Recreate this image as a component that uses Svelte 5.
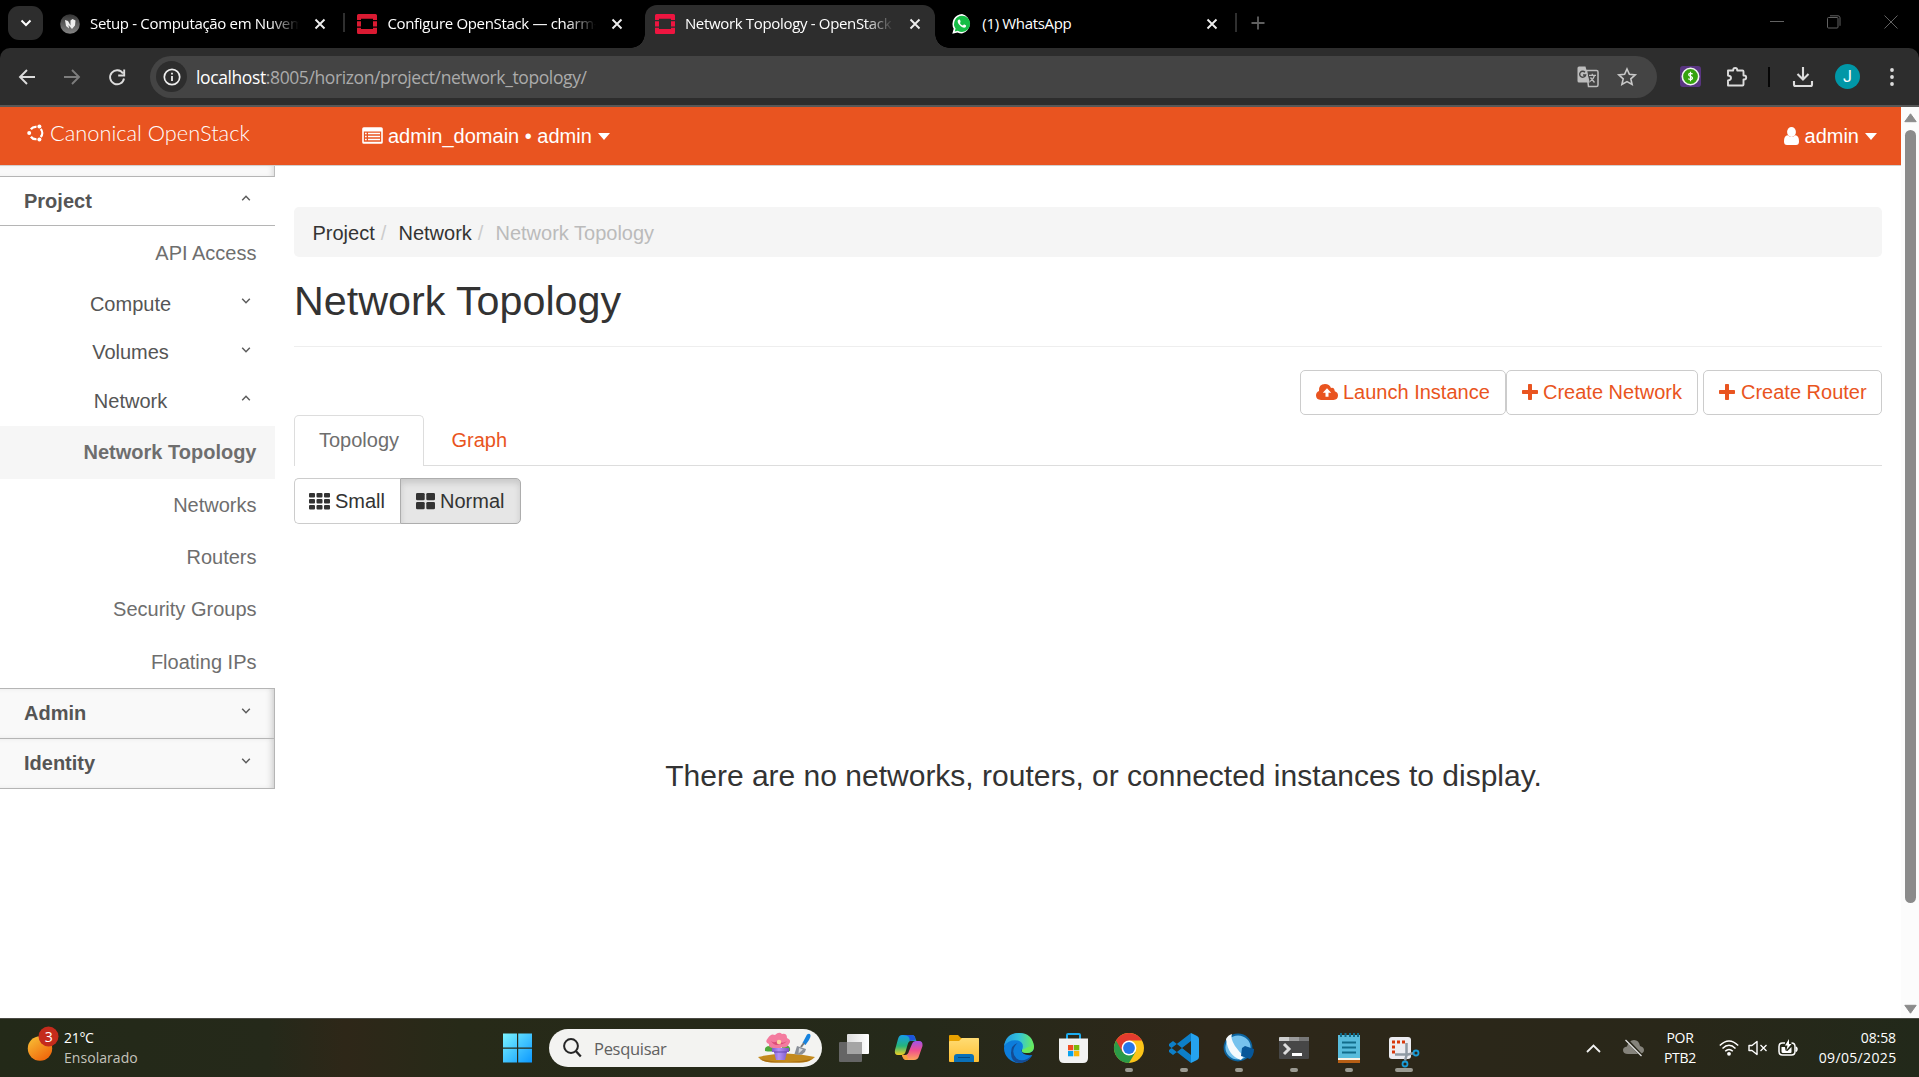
<script>
  const tabs = [
    { title: 'Setup - Computação em Nuvem', icon: 'moodle', fade: true, sep: true },
    { title: 'Configure OpenStack — charm-', icon: 'openstack', fade: true, sep: false },
    { title: 'Network Topology - OpenStack', icon: 'openstack', fade: true, active: true, sep: false },
    { title: '(1) WhatsApp', icon: 'whatsapp', fade: false, sep: true }
  ];
  const groups = [
    { label: 'Compute', open: false },
    { label: 'Volumes', open: false },
    { label: 'Network', open: true }
  ];
  const pages = ['Network Topology', 'Networks', 'Routers', 'Security Groups', 'Floating IPs'];
  const apps = ['taskview', 'copilot', 'explorer', 'edge', 'store', 'chrome', 'vscode', 'workbench', 'terminal', 'notepad', 'snip'];
  const running = ['chrome', 'vscode', 'workbench', 'terminal', 'notepad'];
</script>

{#snippet chevron(up)}
  <svg class="chev" width="10" height="6" viewBox="0 0 10 6"><path d={up ? 'M1.2 5.2 5 1.3l3.800 3.900' : 'M1.200 .8 5 4.700 8.800 .8'} fill="none" stroke="#5c5c5c" stroke-width="1.500" /></svg>
{/snippet}

{#snippet plus()}
  <svg width="16" height="16" viewBox="0 0 16 16"><path d="M6 .8q0-.8.8-.8h2.400q.8 0 .8.8V6h5.200q.8 0 .8.8v2.400q0 .8-.8.8H10v5.200q0 .8-.8.8H6.800q-.8 0-.8-.8V10H.8Q0 10 0 9.200V6.800Q0 6 .8 6H6z" fill="#e95420" /></svg>
{/snippet}

<div class="screen">
  <div class="strip">
    <div class="tabsearch"><svg width="12" height="8" viewBox="0 0 12 8"><path d="M1.500 1.500 6 6l4.500-4.500" fill="none" stroke="#fff" stroke-width="2" /></svg></div>
    {#each tabs as tab}
      <div class="slot">
        <div class="tab" class:active={tab.active}>
          {#if tab.icon === 'moodle'}
            <svg width="20" height="20" viewBox="0 0 20 20"><defs><linearGradient id="mdl" x1="0" y1="0" x2="0" y2="1"><stop stop-color="#333" /><stop offset="1" stop-color="#858585" /></linearGradient></defs><circle cx="10" cy="10" r="9.800" fill="url(#mdl)" /><path d="M5 6l3 1 2.500 4.500V6.500L12.500 5l3 1.500-.5 5-3 3.500-3.500-4 .5 3.500L6 12z" fill="#eee" /></svg>
          {:else if tab.icon === 'openstack'}
            <svg width="20" height="20" viewBox="0 0 20 20"><path d="M1.500 0h17Q20 0 20 1.500V6h-4V4.800H4V6H0V1.500Q0 0 1.500 0zM0 7.200h4v5.200H0zM16 7.200h4v5.200h-4zM0 13.800h4V15h12v-1.200h4v4.700q0 1.500-1.500 1.500h-17Q0 20 0 18.500z" fill={tab.active ? '#ee1540' : '#da1a32'} /></svg>
          {:else}
            <svg width="20" height="20" viewBox="0 0 20 20"><path d="M10 0a10 10 0 0 1 0 19.500 10 10 0 0 1-4.500-1L.3 19.800l1.400-5A10 10 0 0 1 10 0z" fill="#fff" /><path d="M10 1.700a8.100 8.100 0 0 1 0 16.200 8 8 0 0 1-4.200-1.200l-3 .8.8-3A8.100 8.100 0 0 1 10 1.700z" fill="#16bd46" /><path d="M7 5.500c-2.500 1-1 4 .8 5.800s5 3.800 6.200 1.300c.5-1.200-.3-1.400-1.500-2-.8-.4-1 .6-1.700.9C9.300 11.200 8.300 9.800 8 9c1.200-1.300.2-3.500-1-3.500z" fill="#fff" /></svg>
          {/if}
          <span class="tabtitle" class:fade={tab.fade}>{tab.title}</span>
          <svg width="12" height="12" viewBox="0 0 12 12"><path d="M1.500 1.500l9 9m0-9l-9 9" stroke="#eee" stroke-width="1.900" /></svg>
        </div>
        {#if tab.sep}<i class="tabsep"></i>{/if}
      </div>
    {/each}
    <svg class="newtab" width="14" height="14" viewBox="0 0 14 14"><path d="M7 .5v13M.5 7h13" stroke="#606060" stroke-width="1.800" /></svg>
    <div class="winbtns">
      <svg width="14" height="14" viewBox="0 0 14 14"><path d="M0 6.500h14" stroke="#626262" /></svg>
      <svg width="14" height="14" viewBox="0 0 14 14"><rect x=".5" y="2.500" width="10.500" height="10.500" rx="1" fill="none" stroke="#626262" /><path d="M3 .8h8q2 0 2 2v8" fill="none" stroke="#626262" /></svg>
      <svg width="14" height="14" viewBox="0 0 14 14"><path d="M.5.5l13 13m0-13l-13 13" stroke="#626262" /></svg>
    </div>
  </div>

  <div class="toolbarwrap"><div class="toolbar">
    <div class="navicons">
      <svg width="18" height="18" viewBox="0 0 18 18"><path d="M17 9H2.500M9 2 2 9l7 7" fill="none" stroke="#dcdcdc" stroke-width="1.900" /></svg>
      <svg width="18" height="18" viewBox="0 0 18 18"><path d="M1 9h14.500M9 2l7 7-7 7" fill="none" stroke="#7d7d7d" stroke-width="1.900" /></svg>
      <svg width="18" height="18" viewBox="0 0 18 18"><path d="M15 5.500A7 7 0 1 0 16 10.500M16.200 1.500v6h-6" fill="none" stroke="#dcdcdc" stroke-width="1.900" /></svg>
    </div>
    <div class="omnibox">
      <div class="info"><svg width="18" height="18" viewBox="0 0 18 18"><circle cx="9" cy="9" r="7.700" fill="none" stroke="#eee" stroke-width="1.700" /><path d="M9 8v5M9 4.800v1.800" stroke="#eee" stroke-width="1.800" /></svg></div>
      <span class="url"><b>localhost</b>:8005/horizon/project/network_topology/</span>
      <svg class="translate" width="22" height="22" viewBox="0 0 22 22"><path d="M9.500 4.500h10q1.500 0 1.500 1.500v13q0 1.500-1.500 1.500h-8z" fill="none" stroke="#bdbdbd" stroke-width="1.500" /><path d="M2 .5h6.500l4.300 16H2Q.5 16.500.5 15V2Q.5.5 2 .5z" fill="#bdbdbd" /><path d="M8 6.300A3 3 0 1 0 8.600 9H6" fill="none" stroke="#444" stroke-width="1.400" /><path d="M12 9.300h7M15.300 7.800v1.500M17.500 9.500q-1 4-4.500 6M13.500 11.500l4 5" fill="none" stroke="#bdbdbd" stroke-width="1.300" /></svg>
      <svg width="20" height="20" viewBox="0 0 20 20"><path d="M10 2l2.400 5.300 5.800.6-4.400 3.900 1.300 5.700L10 14.600l-5.100 2.900 1.300-5.700L1.800 7.900l5.800-.6z" fill="none" stroke="#c8c8c8" stroke-width="1.600" /></svg>
    </div>
    <svg class="ext" width="21" height="21" viewBox="0 0 21 21"><rect width="21" height="21" rx="3" fill="#593581" /><circle cx="10.500" cy="10.500" r="8.200" fill="#36a30e" stroke="#f3f3f3" stroke-width="1.600" /><path d="M12.700 8.100q-2.200-1.300-3.700-.3-1.100 1.700 1.500 2.600 3.100 1.200 1.500 2.700-1.700.9-3.800-.3M10.500 5.800v9.400" fill="none" stroke="#fff" stroke-width="1.200" /></svg>
    <svg class="puzzle" width="22" height="22" viewBox="0 0 22 22"><path d="M2 4.500h5.200V4a2 2 0 0 1 4 0v.5h5.300q1 0 1 1V9.500h.7a2 2 0 0 1 0 4h-.7v5q0 1-1 1H2v-5c4-.8 4-4.500 0-5z" fill="none" stroke="#dcdcdc" stroke-width="1.900" stroke-linejoin="round" /></svg>
    <i class="toolsep"></i>
    <svg class="download" width="22" height="22" viewBox="0 0 22 22"><path d="M11 1v12M5.500 8l5.500 5.500L16.500 8M2 15v3.500q0 1.500 1.500 1.500h15q1.500 0 1.500-1.500V15" fill="none" stroke="#dcdcdc" stroke-width="2.100" /></svg>
    <div class="avatar">J</div>
    <svg class="dots" width="4" height="18" viewBox="0 0 4 18"><g fill="#dcdcdc"><circle cx="2" cy="2" r="1.900" /><circle cx="2" cy="9" r="1.900" /><circle cx="2" cy="16" r="1.900" /></g></svg>
  </div></div>

  <div class="viewport">
    <div class="page">
      <header>
        <svg class="ubuntu" width="17" height="18" viewBox="0 0 17 18"><g fill="none" stroke="#fff" stroke-width="2.300"><path d="M3.900 5.300A6 6 0 0 1 9.500 2.900" /><path d="M3.900 12.700A6 6 0 0 0 9.500 15.100" /><path d="M13.700 5a6 6 0 0 1 0 8" /></g><g fill="#fff"><circle cx="2.200" cy="9" r="2" /><circle cx="12.400" cy="2.600" r="2" /><circle cx="12.400" cy="15.400" r="2" /></g></svg>
        <span class="brand">Canonical OpenStack</span>
        <svg class="listicon" width="21" height="17" viewBox="0 0 21 17"><path d="M1.800.2h17.400q1.600 0 1.600 1.600v13.400q0 1.600-1.600 1.600H1.800Q.2 16.800.2 15.200V1.800Q.2.200 1.800.2zM1.800 4.500v10.300h17.400V4.500z" fill="#fff" fill-rule="evenodd" /><path d="M3 6.500h1.700M3 9.500h1.700M3 12.500h1.700M6 6.500h12M6 9.500h12M6 12.500h12" stroke="#fff" stroke-width="1.400" /></svg>
        <span class="domain">admin_domain • admin</span>
        <i class="caret"></i>
        <svg class="user" width="15" height="19" viewBox="0 0 15 19"><ellipse cx="7.500" cy="5" rx="4.400" ry="5" fill="#fff" /><path d="M3.600 8.300Q0 8.500 0 14.500 0 18 3 18h9q3 0 3-3.500 0-6-3.600-6.200-3.900 3.200-7.800 0z" fill="#fff" /></svg>
        <span class="username">admin</span>
        <i class="caret"></i>
      </header>
      <div class="body">
        <nav>
          <div class="stub"></div>
          <div class="head open"><span>Project</span>{@render chevron(true)}</div>
          <div class="link api">API Access</div>
          {#each groups as g}
            <div class="group"><span>{g.label}</span>{@render chevron(g.open)}</div>
          {/each}
          {#each pages as p, i}
            <div class="link" class:current={i === 0}>{p}</div>
          {/each}
          <div class="head shut first"><span>Admin</span>{@render chevron(false)}</div>
          <div class="head shut"><span>Identity</span>{@render chevron(false)}</div>
        </nav>
        <main>
          <div class="crumbs"><span>Project</span><i>/</i><span>Network</span><i>/</i><em>Network Topology</em></div>
          <h1>Network Topology</h1>
          <div class="actions">
            <div class="btn launch"><svg width="22" height="16" viewBox="0 0 22 16"><path d="M5 16Q0 15.700 0 11.500 0 8.300 3 7 2.500 0 9 0q4.500 0 6 4 3.300-.8 3.800 3.300Q22 8.300 22 11.500 22 15.500 17.500 16zM11 4.300 6.800 8.800h2.700v4h3v-4h2.700z" fill="#e95420" fill-rule="evenodd" /></svg><span>Launch Instance</span></div>
            <div class="btn network">{@render plus()}<span>Create Network</span></div>
            <div class="btn router">{@render plus()}<span>Create Router</span></div>
          </div>
          <div class="viewtabs"><div class="on">Topology</div><div class="off">Graph</div></div>
          <div class="sizes">
            <div class="size small"><svg width="21" height="17" viewBox="0 0 21 17"><g fill="#333">{#each [0, 6, 12] as y}{#each [0, 7.500, 15] as x}<rect {x} {y} width="6" height="4.600" rx="1" />{/each}{/each}</g></svg><span>Small</span></div>
            <div class="size normal"><svg width="19" height="17" viewBox="0 0 19 17"><g fill="#333"><rect width="8.700" height="7.300" rx="1.300" /><rect x="10.300" width="8.700" height="7.300" rx="1.300" /><rect y="9" width="8.700" height="7.300" rx="1.300" /><rect x="10.300" y="9" width="8.700" height="7.300" rx="1.300" /></g></svg><span>Normal</span></div>
          </div>
          <p class="empty">There are no networks, routers, or connected instances to display.</p>
        </main>
      </div>
    </div>
    <div class="scroll">
      <svg width="13" height="10" viewBox="0 0 13 10"><path d="M6.500.8 12.200 8.700H.8z" fill="#8b8b8b" stroke="#8b8b8b" stroke-linejoin="round" /></svg>
      <div class="thumb"></div>
      <svg width="13" height="10" viewBox="0 0 13 10"><path d="M6.500 9.200 12.200 1.300H.8z" fill="#8b8b8b" stroke="#8b8b8b" stroke-linejoin="round" /></svg>
    </div>
  </div>

  <footer>
    <svg class="sun" width="32" height="36" viewBox="0 0 32 36">
      <defs><linearGradient id="sun" x1="0" y1="0" x2=".7" y2="1"><stop stop-color="#f8c438" /><stop offset="1" stop-color="#f0660b" /></linearGradient></defs>
      <circle cx="12" cy="22.500" r="12.200" fill="url(#sun)" /><circle cx="20.500" cy="10.500" r="10" fill="#c42b1c" /><text x="20.500" y="15.500" text-anchor="middle" font-size="14" fill="#fff">3</text>
    </svg>
    <div class="weather"><span>21°C</span><span class="dim">Ensolarado</span></div>
    <svg class="start" width="30" height="30" viewBox="0 0 30 30"><defs><linearGradient id="win" x1="0" y1="0" x2="1" y2="1"><stop stop-color="#7af3ff" /><stop offset="1" stop-color="#0c98ff" /></linearGradient></defs><path d="M0 .5h14v14H0zM15.200.5H29v14H15.200zM0 15.800h14v13.700H0zM15.200 15.800H29v13.700H15.200z" fill="url(#win)" /></svg>
    <div class="search">
      <svg width="19" height="20" viewBox="0 0 19 20"><circle cx="8" cy="8" r="6.900" fill="none" stroke="#262626" stroke-width="2" /><path d="M12.800 13l5 5.500" stroke="#262626" stroke-width="2.300" /></svg>
      <span>Pesquisar</span>
      <svg class="garden" width="58" height="30" viewBox="0 0 58 30">
        <defs><linearGradient id="pot"><stop stop-color="#7a5bd0" /><stop offset=".4" stop-color="#b292f4" /><stop offset="1" stop-color="#7853c4" /></linearGradient></defs>
        <path d="M0 24q28-7 57 0-5 5.500-15 5.500H17Q4 29.500 0 24z" fill="#c38a1e" /><path d="M2 26q28 6 52 0-5 3.500-13 3.500H17Q6 29.500 2 26z" fill="#a86d11" />
        <path d="M7 18q-1-5 5-5 6 2 6 5-6 1-11 0zM32 18q1-5-4-6-5 2-6 6 6 1 10 0z" fill="#4ea83b" />
        <path d="M10 5q3-5 7-3 4-4 7-1 5-1 5 4 5 2 2 6-3 5-7 3-5 4-8 1-6 0-5-4-5-2-1-6z" fill="#f47b9f" /><path d="M13 8q4 3 7-1 4 5 9 1-3 4-7 3-5 3-9-3z" fill="#dc4d78" /><circle cx="21" cy="9" r="2.300" fill="#fcd7a0" />
        <path d="M14 15h17v4h-2l-2 8H18l-2-8h-2z" fill="url(#pot)" /><path d="M16 19h13" stroke="#6647b2" />
        <path d="M49 1.500q2.500-1.500 3.500.500.500 2-1.500 5L47.500 12 44.500 10z" fill="#1683df" /><path d="M46 10l-3 4" stroke="#777" stroke-width="2" /><path d="M39 13l9 3-1 3-3 2.500q-5 .5-7.500-.5z" fill="#8a9099" /><path d="M41 15l4 1.500-4.500 4z" fill="#d4d8dd" />
      </svg>
    </div>
    <div class="apps">
      {#each apps as a}
        <div class="app">
          <svg width="32" height="36" viewBox="0 0 32 36">
            {#if a === 'taskview'}
              <defs><linearGradient id="tv"><stop stop-color="#ddd" /><stop offset="1" stop-color="#fff" /></linearGradient></defs>
              <rect x="1" y="12" width="23" height="20" rx="1" fill="#656565" /><rect x="9" y="4" width="22" height="20" rx="1" fill="url(#tv)" /><path d="M9 12h15v12H9z" fill="#a5a5a5" />
            {:else if a === 'copilot'}
              <defs><linearGradient id="cp1" x1="0" y1="0" x2="0" y2="1"><stop stop-color="#169de9" /><stop offset=".55" stop-color="#25b57b" /><stop offset="1" stop-color="#f2cf22" /></linearGradient><linearGradient id="cp2" x1="0" y1="0" x2="0" y2="1"><stop stop-color="#a052ea" /><stop offset=".5" stop-color="#f0508c" /><stop offset="1" stop-color="#fca65b" /></linearGradient></defs>
              <path d="M9 5h10q3 0 3.500 4l1 2-6 0q-2 0-3 4l-2 7q-1 3-4 3H5q-4 0-3-5L5 9q1-4 4-4z" fill="url(#cp1)" /><path d="M10 5h9q3 0 3.500 5l-6 1q1-6-6.500-6z" fill="#1d55dc" /><path d="M23 11h3q4 0 3.500 5L26 26q-1 4-5 4h-8q-3 0-4-5h3q3 0 4-4l3-7q1-3 4-3z" fill="url(#cp2)" /><path d="M9 25h5l1 5q-5 0-6-5z" fill="#f6a13b" />
            {:else if a === 'explorer'}
              <defs><linearGradient id="fld" x1="0" y1="0" x2="0" y2="1"><stop stop-color="#ffdc74" /><stop offset="1" stop-color="#ffbf32" /></linearGradient></defs>
              <path d="M1 6q0-1 1-1h8l3 3h17q1 0 1 2v8H1z" fill="#e8a100" /><path d="M1 12q0-1 1-1h9l3-3h16q1 0 1 1v22q0 1-1 1H2q-1 0-1-1z" fill="url(#fld)" /><path d="M6 27q0-3 3-3h14q3 0 3 3v5H6z" fill="#0a70b8" /><path d="M10 27.500h12" stroke="#07497f" />
            {:else if a === 'edge'}
              <defs><linearGradient id="eg1"><stop stop-color="#2299e4" /><stop offset=".5" stop-color="#33c3dc" /><stop offset="1" stop-color="#6bee58" /></linearGradient></defs>
              <circle cx="16" cy="18" r="15" fill="#0d7ddb" />
              <path d="M1 16Q3 3 16 3t15 13q0 7-7 7-6 0-5-3 3-7-4-9.500Q6 9 1 16z" fill="url(#eg1)" />
              <path d="M14.500 13q-8 8-1 15.500 7 5 16-3.500Q25 33 16 33 8 32 8 23q0-8 6.500-10z" fill="#144c94" />
              <path d="M31 17q0 6-7 6-6 0-5-3-1-1-.5 0 0 6 11 5l2 0z" fill="#29271a" />
              <path d="M31 16q0 7-7 7-6 0-5-3l6-3z" fill="#69e95d" />
            {:else if a === 'store'}
              <path d="M9 10V5q0-1 1-1h11q1 0 1 1v5" fill="none" stroke="#1cacf0" stroke-width="2" /><path d="M1 8.500h29V28q0 5-5 5H6q-5 0-5-5z" fill="#f2f2f2" /><path fill="#f04e22" d="M10 15h5.300v5.300H10z" /><path fill="#7cb80b" d="M16 15h5.300v5.300H16z" /><path fill="#0aa2ed" d="M10 21h5.300v5.300H10z" /><path fill="#fbb608" d="M16 21h5.300v5.300H16z" />
            {:else if a === 'chrome'}
              <circle cx="16" cy="18" r="15" fill="#fcc418" /><path d="M16 18 3 10.500A15 15 0 0 0 16 33l6.500-11z" fill="#2b9a47" /><path d="M16 10.500h13A15 15 0 0 0 3 10.500L9.500 22 16 18z" fill="#e33b2e" /><circle cx="16" cy="18" r="7.400" fill="#fff" /><circle cx="16" cy="18" r="5.900" fill="#2676ea" />
            {:else if a === 'vscode'}
              <path d="M23 3l6 3q2 1 2 3v18q0 2-2 3l-6 3z" fill="#25a2ef" /><path d="M23 3v8L5 25l-4-3v-2zM23 33v-8L5 11l-4 3v2z" fill="#0d7fc9" />
            {:else if a === 'workbench'}
              <ellipse cx="15" cy="17.500" rx="13.500" ry="13" fill="#76c2ee" stroke="#0b639f" stroke-width="1.800" /><path d="M3 9q2-4 6-5-2 4 3 12 4 6 9 10l-3 4Q5 26 3 9z" fill="#f6fafd" /><path d="M19 18l3-2 9 3q0 6-4 10l-9-3z" fill="#07579a" />
            {:else if a === 'terminal'}
              <rect x="1" y="7" width="30" height="22" rx="1" fill="#474747" /><path d="M1 8q0-1 1-1h9v4H1z" fill="#cfcfcf" /><path d="M11 7h10v4H11z" fill="#9b9b9b" /><path d="M21 7h10v4H21z" fill="#777" /><path d="M6 14l5 5-5 5" fill="none" stroke="#ddd" stroke-width="3" /><path d="M14 24.500h10" stroke="#fff" stroke-width="3" />
            {:else if a === 'notepad'}
              <path d="M5 28h22v5H5z" fill="#b75e14" /><path d="M5 27h22v3H5z" fill="#f8f3e8" /><path d="M5 5h22v23H5z" fill="#58bcdc" /><path d="M8 3v4M12.500 3v4M17 3v4M21 3v4M25 3v4" stroke="#126d8b" stroke-width="2" /><path d="M9 12.500h14M9 17.500h14M9 22.500h14" stroke="#126d8b" stroke-width="2" />
            {:else}
              <rect x="1" y="7" width="22" height="22" rx="3" fill="#ececf1" /><path d="M4 12h14M5.500 10.500V24" stroke="#d8370b" stroke-width="3" stroke-dasharray="3 2" fill="none" /><path d="M18.500 13v12.500l-1.500 5M7 24.500h13l6-1.500" fill="none" stroke="#8f99a3" stroke-width="2.500" /><circle cx="28" cy="23" r="2.500" fill="none" stroke="#199bd8" stroke-width="1.800" /><circle cx="17" cy="34" r="2.500" fill="none" stroke="#199bd8" stroke-width="1.800" />
            {/if}
          </svg>
          <i class="mark" class:run={running.includes(a)} class:focus={a === 'snip'}></i>
        </div>
      {/each}
    </div>
    <div class="tray">
      <svg class="up" width="15" height="9" viewBox="0 0 15 9"><path d="M1 8l6.500-6.500L14 8" fill="none" stroke="#f2f2f2" stroke-width="1.800" /></svg>
      <svg class="cloud" width="21" height="18" viewBox="0 0 21 18"><path d="M5 15q-5 0-5-4 0-3 4-3.500Q6 1 11 1q5 0 6 6 4 1 4 4t-4 4z" fill="#85837b" /><path d="M3 0l16 17" stroke="#29271a" stroke-width="3" /><path d="M2.500 1l16 16" stroke="#e5e5e5" stroke-width="1.300" /></svg>
      <div class="lang"><span>POR</span><span>PTB2</span></div>
      <svg class="wifi" width="20" height="16" viewBox="0 0 20 16"><g fill="none" stroke="#fff" stroke-width="1.500"><path d="M.8 5.500q9.200-9 18.400 0" /><path d="M3.500 8.500q6.500-6.500 13 0" /><path d="M6.200 11.300q3.800-3.800 7.600 0" /></g><circle cx="10" cy="13.800" r="1.900" fill="#fff" /></svg>
      <svg class="vol" width="20" height="16" viewBox="0 0 20 16"><path d="M1 5.500h3L9 1.500v13L4 10.500H1z" fill="none" stroke="#fff" stroke-width="1.400" stroke-linejoin="round" /><path d="M12.500 5l6 6m0-6l-6 6" stroke="#fff" stroke-width="1.300" /></svg>
      <svg class="bat" width="20" height="18" viewBox="0 0 20 18"><path d="M7 4H4.500Q1 4 1 7.500v5Q1 16 4.500 16h9q3.500 0 3.500-3.500v-5Q17 4 13.500 4" fill="none" stroke="#fff" stroke-width="1.500" /><path d="M18 8q2 2 0 4.500" stroke="#fff" fill="none" stroke-width="1.500" /><path d="M3.500 8h3.500l.5 3.500 2 .5 4-4v5q0 1-1 1H5q-1.500 0-1.500-1.500z" fill="#fff" /><path d="M11 0 7 6.500h2.500L8.500 11 13.500 5H11z" fill="#fff" /></svg>
      <div class="clock"><span>08:58</span><span class="date">09/05/2025</span></div>
    </div>
  </footer>
</div>

<style>
  :global(body) { margin: 0; background: #fff; overflow: hidden; }
  .screen, .screen * { box-sizing: border-box; }
  .screen { width: 1919px; height: 1077px; display: flex; flex-direction: column; font-family: "Liberation Sans", Arial, sans-serif; overflow: hidden; white-space: nowrap; }
  svg { display: block; flex: none; overflow: visible; }
  i, em { font-style: normal; }

  .strip { height: 48px; flex: none; background: #000; display: flex; align-items: flex-start; }
  .tabsearch { width: 35px; height: 34px; margin: 6px 7px 0 8px; border-radius: 11px; background: #2d2d2d; display: flex; align-items: center; justify-content: center; }
  .slot { width: 297.450px; height: 43px; margin-top: 5px; display: flex; }
  .tab { width: 290px; height: 43px; padding: 0 14px 5px 10px; display: flex; align-items: center; position: relative; }
  .tab.active { background: #2d2d2d; border-radius: 12px 12px 0 0; }
  .tab.active::before, .tab.active::after { content: ""; position: absolute; bottom: 0; width: 14px; height: 14px; }
  .tab.active::before { left: -14px; background: radial-gradient(circle at 0 0, transparent 13.500px, #2d2d2d 14px); }
  .tab.active::after { right: -14px; background: radial-gradient(circle at 100% 0, transparent 13.500px, #2d2d2d 14px); }
  .tabtitle { width: 209px; margin: 0 15px 2px 10px; font: 15px/20px "Open Sans", sans-serif; letter-spacing: -0.33px; color: #fff; }
  .fade { -webkit-mask-image: linear-gradient(90deg, #000 86%, transparent 100%); mask-image: linear-gradient(90deg, #000 86%, transparent 100%); }
  .tabsep { width: 2px; height: 19px; margin: 8px 0 0 3px; background: #2f2f2f; }
  .newtab { margin: 16px 0 0 11px; }
  .winbtns { margin: 15px 21px 0 auto; display: flex; gap: 43px; }

  .toolbarwrap { flex: none; height: 59px; background: #000; }
  .toolbar { height: 59px; background: #2d2d2d; border-bottom: 2px solid #575757; border-radius: 10px 10px 0 0; display: flex; align-items: center; }
  .navicons { display: flex; gap: 27px; margin-left: 18px; width: 132px; }
  .omnibox { width: 1507px; height: 42px; border-radius: 21px; background: #444; display: flex; align-items: center; padding: 0 20px 0 6px; }
  .info { width: 31px; height: 31px; border-radius: 50%; background: #2d2d2d; display: flex; align-items: center; justify-content: center; }
  .url { margin-left: 9px; padding-top: 1px; font: 17.500px/24px "Open Sans", sans-serif; letter-spacing: -0.39px; color: #ababab; }
  .url b { font-weight: 400; color: #fff; }
  .translate { margin-left: auto; margin-right: 18px; }
  .ext { margin-left: 23px; }
  .puzzle { margin-left: 25px; }
  .toolsep { width: 2px; height: 20px; background: #050505; margin-left: 20px; }
  .download { margin-left: 22px; }
  .avatar { width: 25px; height: 25px; border-radius: 50%; background: #0097a7; color: #fff; font: 16px/25px Roboto, sans-serif; text-align: center; margin-left: 21px; }
  .dots { margin-left: 30px; }

  .viewport { flex: 1; display: flex; min-height: 0; }
  .page { width: 1901px; display: flex; flex-direction: column; }
  header { height: 59px; flex: none; background: #e95420; border-bottom: 1px solid #d3cfcd; display: flex; align-items: center; color: #fff; font-size: 20px; padding-right: 24px; }
  .ubuntu { margin: 0 6px 6px 27px; }
  .brand { width: 312px; font: 300 21.800px/26px Lato, "Open Sans", sans-serif; margin-bottom: 7px; }
  .listicon { margin-bottom: 2px; }
  .domain { margin-left: 5px; line-height: 24px; }
  .caret { border: 6.500px solid transparent; border-top: 7px solid #fff; border-bottom: 0; margin-left: 6px; }
  .user { margin-left: auto; }
  .username { margin-left: 6px; }

  .body { flex: 1; display: flex; min-height: 0; }
  nav { width: 275px; flex: none; font-size: 20px; color: #555; }
  .stub { height: 11px; background: #f9f9f9; border-bottom: 1px solid #b5b5b5; border-right: 1px solid #bbb; box-shadow: inset -4px 0 5px -2px #ddd; }
  .head { display: flex; justify-content: space-between; height: 49px; padding: 0 24px; line-height: 48px; font-weight: 700; border-bottom: 1px solid #b5b5b5; }
  .chev { margin-top: 18px; }
  .head.shut { height: 50px; line-height: 49px; background: #f9f9f9; border-right: 1px solid #b5b5b5; box-shadow: inset -5px 0 6px -3px #ccc; }
  .head.shut .chev { margin: 19px -1px 0 0; }
  .head.shut.first { height: 51px; border-top: 1px solid #b5b5b5; }
  .link { height: 52.300px; padding-right: 18.500px; line-height: 53px; text-align: right; color: #6e6e6e; }
  .link.api { height: 54.900px; line-height: 54px; }
  .link.current { background: #f6f6f6; font-weight: 700; }
  .group { height: 48.500px; padding: 0 24px; display: flex; line-height: 46px; }
  .group span { width: 213px; text-align: center; flex: none; }
  .group .chev { margin: 17.500px 0 0 4px; }

  main { flex: 1; padding: 41px 19px 0; color: #333; font-size: 20px; }
  .crumbs { height: 50px; border-radius: 5px; background: #f5f5f5; padding-left: 18.500px; line-height: 52px; display: flex; }
  .crumbs i { color: #ccc; width: 23.700px; padding-left: 6px; }
  .crumbs em { color: #bbb; }
  h1 { margin: 0; height: 90px; padding-top: 20px; font: 400 41.250px/48px "Liberation Sans", Arial, sans-serif; border-bottom: 1px solid #eee; }
  .actions { display: flex; justify-content: flex-end; margin-top: 23px; height: 45px; color: #e95420; }
  .btn { height: 45px; border: 1px solid #ccc; border-radius: 5px; display: flex; align-items: center; padding-left: 15px; }
  .btn span { margin-left: 5px; line-height: 43px; }
  .launch { width: 206px; }
  .network { width: 192px; margin-right: 5px; padding-left: 14.500px; }
  .network span { margin-left: 5.500px; }
  .router { width: 179px; }
  .router span { margin-left: 6px; }
  .btn svg { margin-bottom: 2px; }
  .viewtabs { height: 51px; display: flex; border-bottom: 1px solid #ddd; line-height: 49px; }
  .on { width: 130px; height: 51px; border: 1px solid #ddd; border-bottom: 0; border-radius: 5px 5px 0 0; background: #fff; text-align: center; color: #6e6e6e; }
  .off { margin-left: 27.500px; color: #e95420; line-height: 51px; }
  .sizes { display: flex; margin-top: 12px; }
  .size { height: 46px; border: 1px solid #ccc; display: flex; align-items: center; line-height: 44px; }
  .size span { margin-left: 5px; }
  .small { width: 106px; padding-left: 14px; border-radius: 5px 0 0 5px; border-right: 0; }
  .normal { width: 121px; padding-left: 15px; border-color: #adadad; border-radius: 0 5px 5px 0; background: #e6e6e6; box-shadow: inset 0 4px 6px rgba(0, 0, 0, .13); }
  .empty { margin: 234px 0 0 31px; text-align: center; font-size: 30px; line-height: 36px; }

  .scroll { width: 18px; background: #fcfcfc; display: flex; flex-direction: column; align-items: center; padding: 6px 0 4px; }
  .thumb { width: 11px; height: 773px; margin: 7px 0 auto; border-radius: 6px; background: #8b8b8b; }

  footer { height: 59px; flex: none; background: linear-gradient(90deg, #232918 0, #25291a 14%, #2e2718 18%, #272a18 24%, #25291a 48%, #2e2719 63%, #292719 87%, #22291a 100%); border-top: 1px solid #4a4a44; display: flex; align-items: center; color: #fff; font: 14px/20px "Open Sans", sans-serif; letter-spacing: -0.3px; }
  .sun { margin: 0 4px 8px 28px; }
  .weather { width: 439px; display: flex; flex-direction: column; }
  .dim { color: #c4c4bd; letter-spacing: 0.05px; }
  .start { margin-right: 16px; }
  .search { width: 273px; height: 38px; border-radius: 19px; background: #f3f3f1; display: flex; align-items: center; padding-left: 14px; color: #606060; font-size: 16.500px; }
  .search span { margin-left: 12px; width: 164px; padding-top: 1px; }
  .apps { display: flex; gap: 23px; margin-left: 16px; height: 58px; }
  .app { width: 32px; display: flex; flex-direction: column; align-items: center; padding-top: 11px; }
  .mark { width: 8px; height: 4px; border-radius: 2px; margin-top: 2px; }
  .run { background: #9b9a92; }
  .focus { background: #9b9a92; width: 18px; }
  .tray { margin-left: auto; margin-right: 23px; display: flex; align-items: center; }
  .up { margin-right: 22px; }
  .cloud { margin-right: 20px; }
  .lang { width: 33px; display: flex; flex-direction: column; align-items: center; margin-right: 22px; }
  .wifi { margin-right: 9px; }
  .vol { margin-right: 10px; }
  .clock { width: 98.500px; display: flex; flex-direction: column; align-items: flex-end; letter-spacing: -0.1px; }
  .date { letter-spacing: 0.35px; margin-right: -0.500px; }
</style>
